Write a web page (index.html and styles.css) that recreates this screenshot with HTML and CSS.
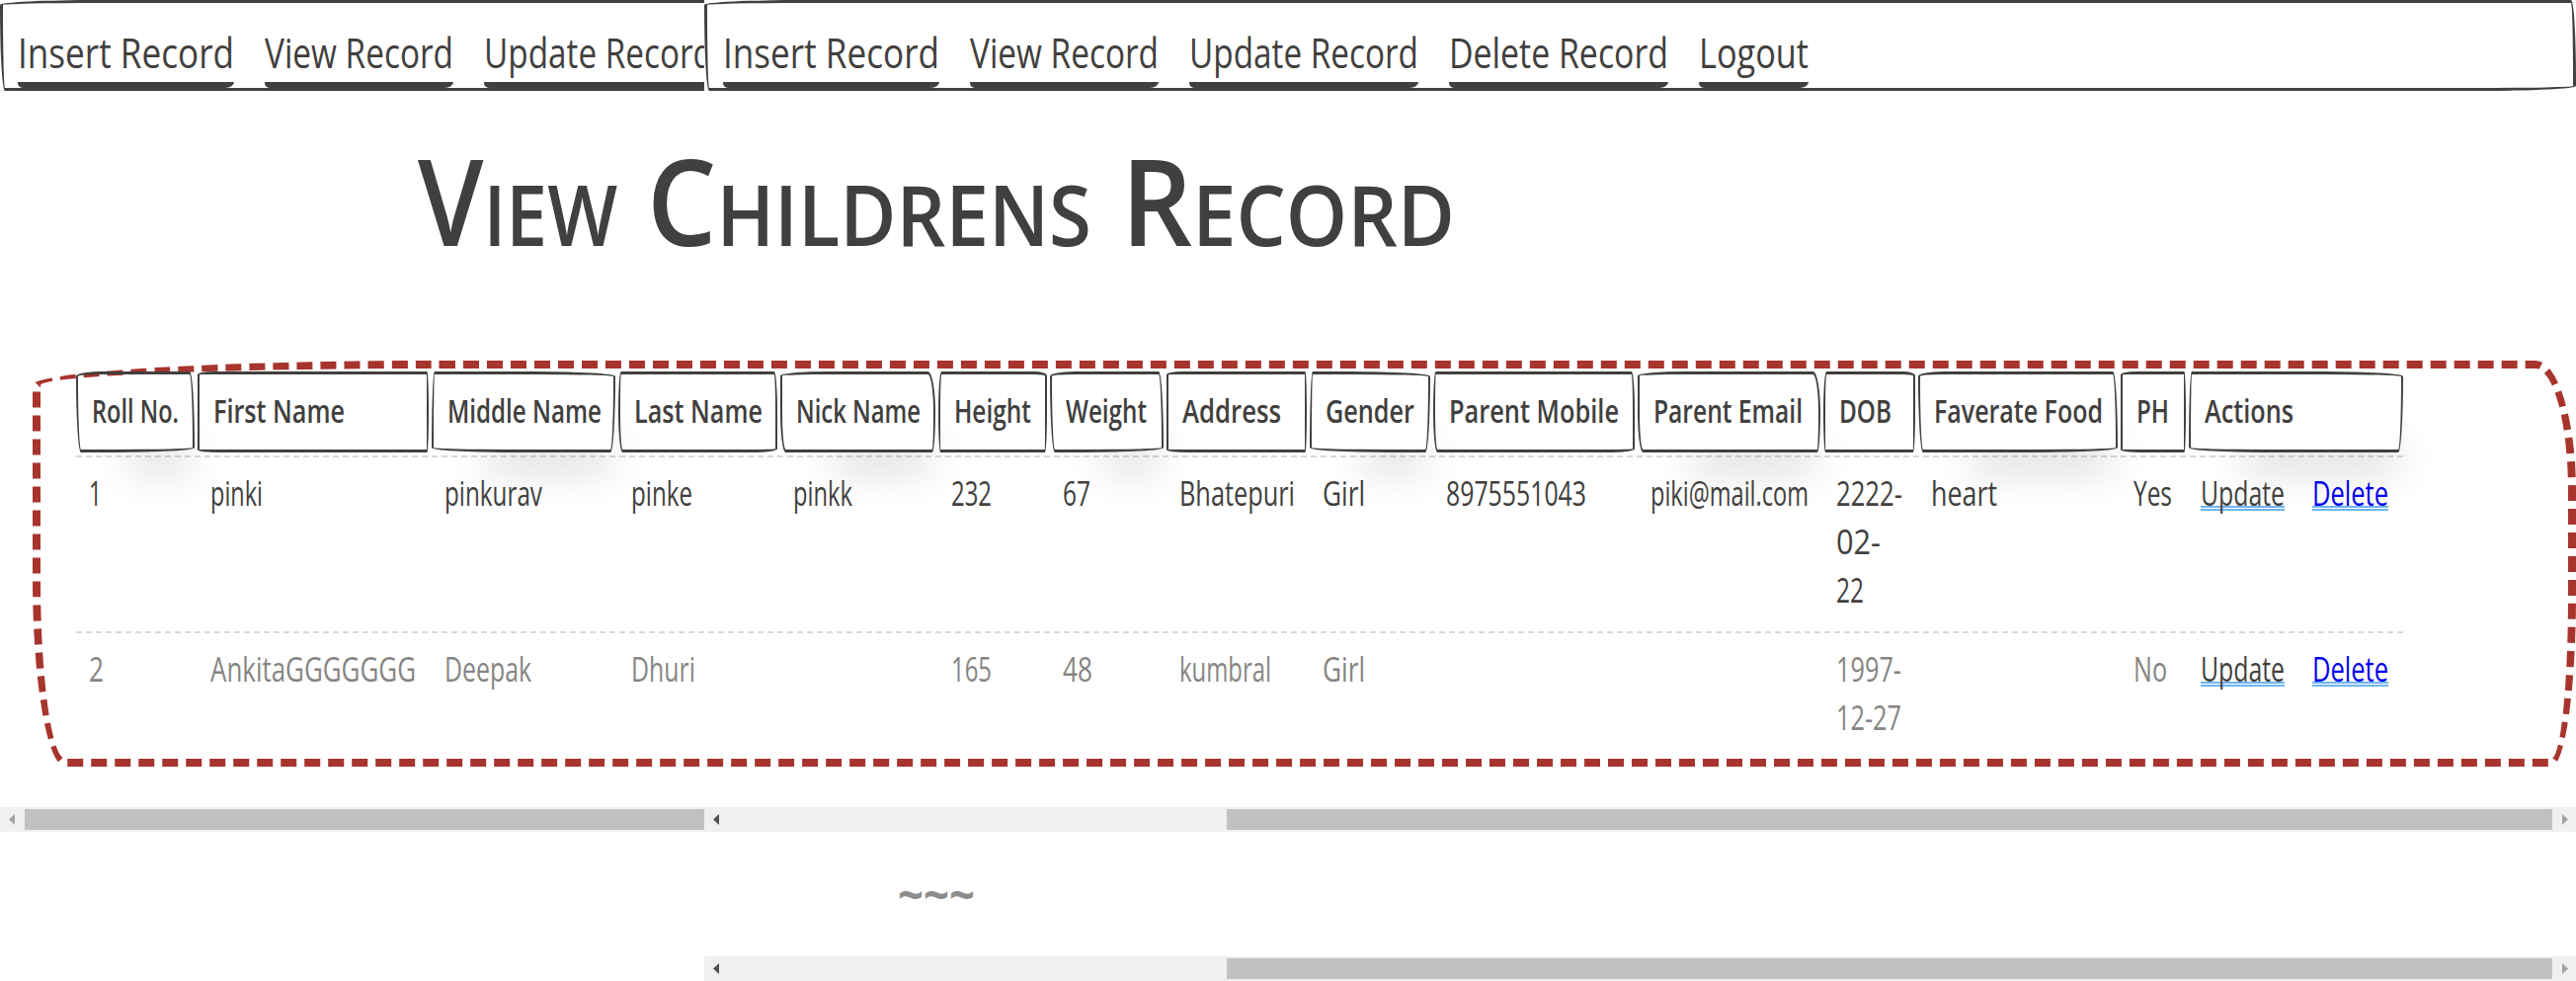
FILE: index.html
```
<!DOCTYPE html>
<html lang="en">
<head>
<meta charset="utf-8">
<title>View Childrens Record</title>
<link rel="stylesheet" href="styles.css">
</head>
<body>
<header class="navs">
  <div class="nav-clip">
    <nav class="nav nav-wide">
      <a class="nav-item"><span data-width="219">Insert Record</span></a>
      <a class="nav-item"><span data-width="191">View Record</span></a>
      <a class="nav-item"><span data-width="232">Update Record</span></a>
    </nav>
  </div>
  <nav class="nav nav-main">
    <a class="nav-item"><span data-width="219">Insert Record</span></a>
    <a class="nav-item"><span data-width="191">View Record</span></a>
    <a class="nav-item"><span data-width="232">Update Record</span></a>
    <a class="nav-item"><span data-width="222">Delete Record</span></a>
    <a class="nav-item"><span data-width="111">Logout</span></a>
  </nav>
</header>
<main>
  <h1 class="title"><span data-width="202">View</span><span data-width="450">Childrens</span><span data-width="338">Record</span></h1>
  <section class="frame">
    <div class="row head">
      <div class="th"><span data-width="88">Roll No.</span></div>
      <div class="th"><span data-width="133">First Name</span></div>
      <div class="th"><span data-width="156">Middle Name</span></div>
      <div class="th"><span data-width="130">Last Name</span></div>
      <div class="th"><span data-width="126">Nick Name</span></div>
      <div class="th"><span data-width="78">Height</span></div>
      <div class="th"><span data-width="82">Weight</span></div>
      <div class="th"><span data-width="100">Address</span></div>
      <div class="th"><span data-width="90">Gender</span></div>
      <div class="th"><span data-width="172">Parent Mobile</span></div>
      <div class="th"><span data-width="151">Parent Email</span></div>
      <div class="th"><span data-width="53">DOB</span></div>
      <div class="th"><span data-width="171">Faverate Food</span></div>
      <div class="th"><span data-width="33">PH</span></div>
      <div class="th"><span data-width="90">Actions</span></div>
    </div>
    <div class="row first">
      <div class="td"><span data-width="13">1</span></div>
      <div class="td"><span data-width="53">pinki</span></div>
      <div class="td"><span data-width="99">pinkurav</span></div>
      <div class="td"><span data-width="62">pinke</span></div>
      <div class="td"><span data-width="60">pinkk</span></div>
      <div class="td"><span data-width="41">232</span></div>
      <div class="td"><span data-width="28">67</span></div>
      <div class="td"><span data-width="117">Bhatepuri</span></div>
      <div class="td"><span data-width="43">Girl</span></div>
      <div class="td"><span data-width="142">8975551043</span></div>
      <div class="td"><span data-width="160">piki@mail.com</span></div>
      <div class="td"><span data-width="67">2222-</span><br><span data-width="45">02-</span><br><span data-width="28">22</span></div>
      <div class="td"><span data-width="67">heart</span></div>
      <div class="td"><span data-width="39">Yes</span></div>
      <div class="td actions"><a class="link update"><span data-width="85">Update</span></a><a class="link delete"><span data-width="77">Delete</span></a></div>
    </div>
    <div class="row second">
      <div class="td"><span data-width="15">2</span></div>
      <div class="td"><span data-width="208">AnkitaGGGGGGG</span></div>
      <div class="td"><span data-width="88">Deepak</span></div>
      <div class="td"><span data-width="65">Dhuri</span></div>
      <div class="td"></div>
      <div class="td"><span data-width="41">165</span></div>
      <div class="td"><span data-width="30">48</span></div>
      <div class="td"><span data-width="93">kumbral</span></div>
      <div class="td"><span data-width="43">Girl</span></div>
      <div class="td"></div>
      <div class="td"></div>
      <div class="td"><span data-width="66">1997-</span><br><span data-width="66">12-27</span></div>
      <div class="td"></div>
      <div class="td"><span data-width="34">No</span></div>
      <div class="td actions"><a class="link update"><span data-width="85">Update</span></a><a class="link delete"><span data-width="77">Delete</span></a></div>
    </div>
  </section>
</main>
<div class="bars">
  <div class="bar bar-start"><i class="arrow left dim"></i><i class="thumb"></i></div>
  <div class="bar bar-end"><i class="arrow left"></i><i class="thumb"></i><i class="arrow right"></i></div>
</div>
<p class="tildes"><span data-width="78">~~~</span></p>
<div class="bars">
  <div class="blank"></div>
  <div class="bar bar-end"><i class="arrow left"></i><i class="thumb"></i><i class="arrow right"></i></div>
</div>
<script src="fit.js"></script>
</body>
</html>
```
FILE: styles.css
```
* { box-sizing: border-box; }
body {
  margin: 0;
  width: 2608px;
  height: 993px;
  overflow: hidden;
  background: #fff;
  color: #41403e;
  font-family: "Open Sans", "Noto Sans", sans-serif;
}
[data-width] { display: inline-block; white-space: nowrap; transform-origin: left; }

.navs { display: flex; height: 92px; }
.nav-clip { width: 713px; overflow: hidden; }
.nav {
  display: flex;
  gap: 31px;
  height: 92px;
  padding: 24px 16px 0;
  border: 3px solid #41403e;
  border-radius: 100px 5px 100px 5px / 5px 80px 5px 85px;
}
.nav-wide { width: 1895px; padding-left: 15px; }
.nav-main { flex: 1; }
.nav-item {
  height: 62px;
  padding-top: 1px;
  border-bottom: 6px solid #41403e;
  border-radius: 0 0 9px 5px / 0 0 6px 5px;
  font-size: 42.5px;
  line-height: 50px;
}

.title {
  display: flex;
  gap: 30px;
  height: 121px;
  margin: 50px 0 102px 423px;
  font-size: 121px;
  line-height: 121px;
  font-weight: 600;
  font-variant: small-caps;
}

.frame {
  height: 411px;
  margin-left: 33px;
  padding: 3px 0 0 36px;
  border: 8px dashed #a7342d;
  border-radius: 412px 41px 25px 33px / 25px 132px 173px 190px;
}
.row {
  display: grid;
  grid-template-columns: 123px 237px 189px 164px 160px 113px 118px 145px 125px 207px 188px 96px 205px 69px 217px;
  width: 2356px;
}
.head { height: 82px; margin-bottom: 3px; }
.th {
  margin-right: 3px;
  padding: 1px 0 3px 14px;
  border: 3px solid #41403e;
  border-left-width: 2px;
  border-right-width: 2px;
  font-size: 33px;
  font-weight: 600;
  line-height: 72px;
}
.th:last-child { margin-right: 0; }
.th:nth-child(odd) { box-shadow: 25px 46px 41px -30px rgba(0, 0, 0, .2); }
.th:nth-child(6n+1) { border-radius: 25px 5px 80px 5px / 5px 76px 5px 76px; }
.th:nth-child(6n+2) { border-radius: 30px 3px 3px 40px / 6px 76px 76px 5px; }
.th:nth-child(6n+3) { border-radius: 3px 80px 5px 80px / 76px 5px 76px 5px; }
.th:nth-child(6n+4) { border-radius: 5px 6px 50px 8px / 76px 76px 7px 76px; }
.th:nth-child(6n+5) { border-radius: 90px 14px 6px 10px / 8px 76px 76px 76px; }
.th:nth-child(6n) { border-radius: 6px 24px 4px 4px / 76px 8px 76px 76px; }
.td { padding: 12px 0 0 13px; font-size: 34px; line-height: 49px; }
.first, .second { border-top: 2px dashed #d9d9d8; }
.first { height: 178px; }
.second { color: #868583; }
.actions { display: flex; align-items: flex-start; gap: 28px; padding-left: 12px; }
.link {
  height: 42px;
  border-bottom: 5px double #6fb3f2;
}
.update { color: #41403e; }
.delete { color: #00e; }

.bars { display: flex; height: 25px; }
main + .bars { margin-top: 41px; }
.bar { display: flex; align-items: center; background: #f0f0f0; }
.bar-start, .blank { width: 713px; }
.bar-start { padding-left: 9px; gap: 10px; }
.bar-end { flex: 1; padding: 0 8px 0 9px; }
.thumb { flex: 1; height: 21px; background: #c1c1c1; }
.bar-end .thumb { margin: 0 10px 0 514px; }
.arrow { width: 6px; height: 11px; background: #505050; }
.left { clip-path: polygon(100% 0, 100% 100%, 0 50%); }
.right { clip-path: polygon(0 0, 0 100%, 100% 50%); }
.dim, .right { background: #a3a3a3; }

.tildes {
  height: 126px;
  margin: 0;
  padding: 35px 0 0 909px;
  color: #8d8c8b;
  font-size: 48px;
  font-weight: 700;
  line-height: 56px;
}
```
FILE: fit.js
```
// Condense each label to the width of its slot.
const labels = [...document.querySelectorAll("[data-width]")];
const natural = labels.map(el => el.getBoundingClientRect().width);
labels.forEach((el, i) => {
  const target = Number(el.dataset.width);
  el.style.transform = `scaleX(${target / natural[i]})`;
  el.style.marginRight = `${target - natural[i]}px`;
});
```
